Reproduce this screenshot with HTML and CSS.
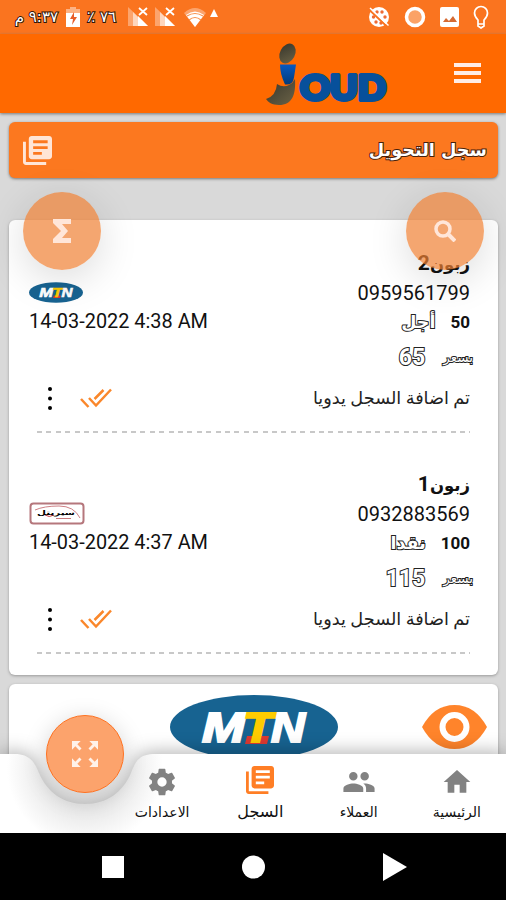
FILE: index.html
```html
<!DOCTYPE html>
<html lang="ar">
<head>
<meta charset="utf-8">
<title>سجل التحويل</title>
<link rel="stylesheet" href="styles.css">
</head>
<body>
<svg width="0" height="0" class="defs">
  <defs>
    <symbol id="library" viewBox="2 2 20 20"><path d="M4 6H2v14c0 1.100.9 2 2 2h14v-2H4V6zM20 2H8c-1.100 0-2 .9-2 2v12c0 1.100.9 2 2 2h12c1.100 0 2-.9 2-2V4c0-1.100-.9-2-2-2zm-1 9H9V9h10v2zm-4 4H9v-2h6v2zm4-8H9V5h10v2z"/></symbol>
    <symbol id="done" viewBox="0 0 34 20"><path d="M1 11l7.500 8M9 10l7 7.500L31 1.500M14.500 11l9-9" fill="none" stroke="currentColor" stroke-width="2.500"/></symbol>
    <symbol id="more" viewBox="0 0 6 24"><circle cx="3" cy="3" r="2"/><circle cx="3" cy="12.500" r="2"/><circle cx="3" cy="22" r="2"/></symbol>
    <symbol id="mtn" viewBox="0 0 168 64"><ellipse cx="84" cy="32" rx="84" ry="32" fill="#176391"/><path d="M77 41h22l-2 8H75z" fill="#dc3932"/><g font-family="Liberation Sans, sans-serif" font-size="42" font-weight="700" font-style="italic" stroke-width="2"><text x="32" y="47" textLength="43" lengthAdjust="spacingAndGlyphs" fill="#fff" stroke="#fff">M</text><text x="73" y="47" textLength="30" lengthAdjust="spacingAndGlyphs" fill="#fc0" stroke="#fc0">T</text><text x="101" y="47" textLength="34" lengthAdjust="spacingAndGlyphs" fill="#fff" stroke="#fff">N</text></g></symbol>
    <symbol id="signal" viewBox="0 0 20 20"><path d="M0 0L20 19H0z" fill="#fff" opacity=".35"/><path d="M5 5L10 10V19H5z" fill="#fff" opacity=".55"/><path d="M10 9L20 19H10z" fill="#fff"/><path d="M11 1l8 7M19 1l-8 7" stroke="#fff" stroke-width="1.800"/></symbol>
    <linearGradient id="stone" x2="1" y2="1"><stop stop-color="#35352b"/><stop offset="1" stop-color="#6c6347"/></linearGradient>
    <linearGradient id="blue" x2="0" y2="1"><stop stop-color="#0759c2"/><stop offset="1" stop-color="#043b78"/></linearGradient>
  </defs>
</svg>
<div class="screen">
  <div class="status">
    <div class="status-left">
      <span class="status-text time" dir="rtl">٩:٣٧ م</span>
      <svg class="battery" viewBox="0 0 14 20"><path d="M4 0h6v2h4v5H0V2h4z" fill="#fff" opacity=".45"/><path d="M0 6h14v14H0z" fill="#fff"/><path d="M8 5l-4 7h3l-1 6 5-8H8z" fill="#e85d28"/></svg>
      <span class="status-text percent" dir="rtl">٧٦ ٪</span>
      <svg class="signal"><use href="#signal"/></svg>
      <svg class="signal second"><use href="#signal"/></svg>
      <svg class="wifi" viewBox="0 0 22 19"><path d="M0 5Q11-5 22 5L11 19z" fill="#fff" opacity=".35"/><path d="M2 7Q11 0 20 7L11 19z" fill="#fff"/><path d="M3 8Q11 3 19 8M5 12Q11 7 17 12" fill="none" stroke="#f9924d" stroke-width="1.200"/></svg>
      <svg class="caret" viewBox="0 0 8 8"><path d="M4 0l4 8H0z" fill="#fff"/></svg>
    </div>
    <div class="status-right">
      <svg width="22" height="22" viewBox="0 0 22 22"><circle cx="11" cy="11" r="10" fill="#fff"/><g fill="#ef6b35"><circle cx="5.500" cy="11" r="1.700"/><circle cx="9" cy="6" r="1.700"/><circle cx="14" cy="6" r="1.700"/><circle cx="17" cy="11" r="1.700"/><circle cx="8" cy="16" r="1.700"/><circle cx="13" cy="17" r="1.700"/></g><path d="M1 3.500l18 17" stroke="#fa741f" stroke-width="2"/><path d="M2 2L20.500 19.500" stroke="#fff" stroke-width="1.500"/></svg>
      <svg width="22" height="22" viewBox="0 0 22 22"><circle cx="11" cy="11" r="8.500" fill="#fba266" stroke="#fff" stroke-width="3.500"/></svg>
      <svg width="19" height="20" viewBox="0 0 19 20"><rect width="19" height="20" rx="2" fill="#fff"/><path d="M3 15l3-4 3 3 4-5 4 6z" fill="#d66a32"/></svg>
      <svg width="16" height="24" viewBox="0 0 16 24"><path d="M5 19v-4C2 12 1.500 10 1.500 8a6.500 6.500 0 0113 0c0 2-.5 4-3.500 7v4zM5 18v3l3 2 3-2v-3" fill="none" stroke="#fff" stroke-width="1.700"/></svg>
    </div>
  </div>
  <div class="appbar">
    <svg class="brand" viewBox="0 0 130 70" width="130" height="70">
      <ellipse cx="21.500" cy="10.500" rx="7.500" ry="10.500" transform="rotate(28 21.500 10.500)" fill="url(#stone)"/>
      <path d="M14 21.500h16l-2 13q-1 8-9 7Q14 31 14 21.500z" fill="url(#blue)"/>
      <path d="M11 41q6 4 12 1 4-2 6-6c1 16-3 26-16 26-7 0-11-3-13-6q10-3 11-15z" fill="url(#stone)"/>
      <text x="34" y="57" textLength="86" lengthAdjust="spacingAndGlyphs">OUD</text>
    </svg>
    <div class="menu"><i></i><i></i><i></i></div>
  </div>
  <main class="content">
    <div class="title-card">
      <svg width="29" height="29"><use href="#library"/></svg>
      <h1 dir="rtl">سجل التحويل</h1>
    </div>
    <section class="card records">
      <article class="record">
        <div class="row name"><span dir="rtl">زبون<span class="digit">2</span></span></div>
        <div class="row phone"><svg class="operator" width="54" height="21"><use href="#mtn"/></svg><span>0959561799</span></div>
        <div class="row kind"><time>14-03-2022 4:38 AM</time><div class="pair"><span class="outlined state" dir="rtl">أجل</span><b>50</b></div></div>
        <div class="row price"><span class="outlined amount">65</span><span class="outlined label" dir="rtl">بسعر</span></div>
        <div class="row note"><div class="actions"><svg width="6" height="24"><use href="#more"/></svg><svg class="done" width="34" height="20"><use href="#done"/></svg></div><span dir="rtl">تم اضافة السجل يدويا</span></div>
        <div class="divider"></div>
      </article>
      <article class="record">
        <div class="row name"><span dir="rtl">زبون<span class="digit">1</span></span></div>
        <div class="row phone"><svg class="operator" width="56" height="23" viewBox="0 0 56 23"><rect x="1.500" y="1.500" width="53" height="20" rx="3" fill="#fff" stroke="#b5777c" stroke-width="2"/><path d="M6 8Q15 4 30 4t21 12" fill="none" stroke="#ce8085"/><path d="M16 13q4 3 9 0" fill="none" stroke="#c33a40"/><text x="8" y="13" font-family="DejaVu Sans, sans-serif" font-size="6.500" font-weight="700" textLength="38" lengthAdjust="spacingAndGlyphs">سيريتل</text><path d="M27 16.500h15" stroke="#c9797d"/></svg><span>0932883569</span></div>
        <div class="row kind"><time>14-03-2022 4:37 AM</time><div class="pair"><span class="outlined state" dir="rtl">نقدا</span><b>100</b></div></div>
        <div class="row price"><span class="outlined amount">115</span><span class="outlined label" dir="rtl">بسعر</span></div>
        <div class="row note"><div class="actions"><svg width="6" height="24"><use href="#more"/></svg><svg class="done" width="34" height="20"><use href="#done"/></svg></div><span dir="rtl">تم اضافة السجل يدويا</span></div>
        <div class="divider"></div>
      </article>
    </section>
    <section class="card summary">
      <span></span>
      <svg width="168" height="64"><use href="#mtn"/></svg>
      <svg class="eye" width="65" height="44" viewBox="0 0 65 44"><path d="M0 22Q12 0 32.500 0T65 22Q53 44 32.500 44T0 22z" fill="#ff842b"/><circle cx="32.500" cy="22" r="12" fill="none" stroke="#fff" stroke-width="6"/></svg>
    </section>
  </main>
  <nav class="bottom">
    <svg class="notch" width="506" height="80" viewBox="0 0 506 80"><defs><radialGradient id="glow" gradientUnits="userSpaceOnUse" cx="85" cy="15" r="78"><stop offset=".4" stop-color="#e2e2e2"/><stop offset="1" stop-color="#fff"/></radialGradient></defs><path fill="url(#glow)" d="M0 0H15C30 0 35 9 39 19C47 38 63 50 85 50S123 38 131 19C136 6 140 0 155 0H506V80H0z"/></svg>
    <div class="tabs">
      <a><svg width="32" height="32" viewBox="0 0 24 24"><path d="M19.430 12.980c.040-.320.070-.640.070-.980s-.030-.660-.070-.980l2.110-1.650a.5.5 0 00.120-.640l-2-3.460a.5.5 0 00-.610-.220l-2.490 1a7.300 7.300 0 00-1.690-.980L14.490 2.420A.5.5 0 0014 2h-4a.5.5 0 00-.490.420l-.380 2.650c-.610.250-1.170.590-1.690.980l-2.490-1a.5.5 0 00-.610.220l-2 3.460a.5.5 0 00.120.640l2.110 1.650c-.040.320-.070.650-.070.980s.030.660.070.980l-2.110 1.650a.5.5 0 00-.120.640l2 3.460c.120.220.390.300.610.220l2.490-1c.520.400 1.080.730 1.690.980l.380 2.650c.030.240.240.420.490.420h4c.250 0 .460-.180.490-.420l.380-2.650c.610-.250 1.170-.590 1.690-.980l2.490 1c.230.090.490 0 .610-.220l2-3.460a.5.5 0 00-.120-.640zM12 15.500a3.500 3.500 0 110-7 3.500 3.500 0 010 7z"/></svg><span dir="rtl">الاعدادات</span></a>
      <a class="active"><svg width="28" height="28"><use href="#library"/></svg><span dir="rtl">السجل</span></a>
      <a><svg width="34" height="34" viewBox="0 0 24 24"><path d="M16 11c1.660 0 2.990-1.340 2.990-3S17.660 5 16 5s-3 1.340-3 3 1.340 3 3 3zm-8 0c1.660 0 2.990-1.340 2.990-3S9.660 5 8 5 5 6.340 5 8s1.340 3 3 3zm0 2c-2.330 0-7 1.170-7 3.500V19h14v-2.500C15 14.170 10.330 13 8 13zm8 0c-.290 0-.620.020-.970.050C16.190 13.890 17 15.020 17 16.500V19h6v-2.500c0-2.330-4.670-3.500-7-3.500z"/></svg><span dir="rtl">العملاء</span></a>
      <a><svg width="32" height="32" viewBox="0 0 24 24"><path d="M10 20v-6h4v6h5v-8h3L12 3 2 12h3v8z"/></svg><span dir="rtl">الرئيسية</span></a>
    </div>
  </nav>
  <div class="system">
    <svg width="506" height="67" viewBox="0 0 506 67"><rect x="102" y="23" width="22" height="22"/><circle cx="253.500" cy="34" r="11.500"/><path d="M383 20L407 34 383 48z"/></svg>
  </div>
  <div class="fab sum"><svg width="18" height="24" viewBox="0 0 18 24"><path d="M0 0h18v5H9l6 7-6 7h9v5H0v-4l8-8-8-8z"/></svg></div>
  <div class="fab search"><svg width="22" height="22" viewBox="0 0 22 22"><circle cx="9" cy="9" r="7" fill="none" stroke="#ffe6d9" stroke-width="3.500"/><path d="M14 14l7 7" stroke="#ffe6d9" stroke-width="4"/></svg></div>
  <div class="fab expand"><svg width="26" height="26" viewBox="3 3 18 18"><path d="M15 3l2.300 2.300-2.890 2.870 1.420 1.420L18.700 6.700 21 9V3zM3 9l2.300-2.300 2.870 2.890 1.420-1.420L6.700 5.300 9 3H3zm6 12l-2.300-2.300 2.890-2.870-1.420-1.420L5.300 17.300 3 15v6zm12-6l-2.300 2.300-2.870-2.890-1.420 1.420 2.890 2.870L15 21h6z"/></svg></div>
</div>
</body>
</html>
```
FILE: styles.css
```css
* { box-sizing: border-box; }
body { margin: 0; font-family: Roboto, "DejaVu Sans", sans-serif; color: #111; }
svg { display: block; flex: none; }
.defs { position: absolute; }
.screen { position: relative; width: 506px; height: 900px; overflow: hidden; display: flex; flex-direction: column; }

.status { height: 34px; flex: none; background: #fa741f; display: flex; justify-content: space-between; padding: 0 17px 0 12px; }
.status-left, .status-right { display: flex; align-items: center; }
.status-right { gap: 14px; }
.status-text { color: #fff; font: 15px/20px "DejaVu Sans", sans-serif; -webkit-text-stroke: 2px #33170a; paint-order: stroke fill; white-space: nowrap; }
.time { width: 46px; }
.battery { width: 14px; height: 20px; margin: 0 6px 0 8px; }
.percent { width: 30px; }
.signal { width: 20px; height: 20px; margin-left: 12px; }
.signal.second { margin-left: 7px; }
.wifi { width: 22px; height: 19px; margin-left: 9px; }
.caret { width: 8px; height: 8px; margin: -8px 0 0 4px; }

.appbar { height: 79px; flex: none; background: #ff6900; display: flex; justify-content: flex-end; align-items: flex-start; padding: 9px 25px 0 0; gap: 58px; box-shadow: 0 1px 3px #777; z-index: 1; }
.brand { overflow: visible; }
.brand text { font: 900 34px Lato, sans-serif; fill: #07509b; stroke: #07509b; stroke-width: 4px; stroke-linejoin: round; }
.menu { width: 27px; padding-top: 20px; display: grid; gap: 4px; }
.menu i { height: 4px; background: #ffece6; }

.content { flex: 1; min-height: 0; overflow: hidden; background: #d9d9d9; padding: 9px 8px 0 9px; display: flex; flex-direction: column; }
.title-card { height: 56px; flex: none; border-radius: 6px; background: #fc781f; box-shadow: 0 1px 3px #777; display: flex; justify-content: space-between; align-items: center; padding: 0 11px 0 14px; fill: #ffe5d6; }
h1 { margin: 0; font: 700 17.700px/30px "DejaVu Sans", sans-serif; color: #fff; -webkit-text-stroke: 2px #46200d; paint-order: stroke fill; }
.card { background: #fff; border-radius: 6px; box-shadow: 0 1px 3px #999; flex: none; }
.records { margin-top: 42px; height: 455px; padding: 30px 28px 0 20px; }
.record { height: 221px; }
.row { display: flex; align-items: center; justify-content: space-between; font-size: 20px; }
.name { height: 28px; justify-content: flex-end; font: 700 16.500px/28px Roboto, "DejaVu Sans", sans-serif; }
.digit { font-size: 21px; }
.phone { height: 29px; }
.kind { height: 29px; }
.kind time { margin-top: -1px; font-size: 19.900px; }
.kind b { font-size: 17px; }
.pair { display: flex; align-items: center; gap: 15px; }
.outlined { color: #fff; -webkit-text-stroke: 2px #222; paint-order: stroke fill; font-family: Roboto, "DejaVu Sans", sans-serif; }
.state { font-size: 17.500px; font-weight: 700; }
.price { height: 42px; justify-content: flex-end; gap: 18px; margin-right: -3px; }
.amount { font-size: 23px; font-weight: 700; }
.label { font-size: 13.500px; }
.note { height: 40px; }
.note > span { font-size: 17.700px; color: #222; }
.actions { display: flex; align-items: center; gap: 27px; padding-left: 18px; }
.done { color: #fa872b; }
.divider { margin-left: 8px; margin-top: 13px; height: 2px; background: repeating-linear-gradient(90deg, #c8c8c8 0 5px, transparent 5px 9.400px); }
.summary { margin-top: 9px; height: 180px; display: grid; grid-template-columns: 161px 1fr 65px; padding: 11px 11px 0 0; }
.eye { margin-top: 10px; }

.bottom { position: absolute; left: 0; right: 0; top: 754px; height: 80px; }
.notch { position: absolute; inset: 0; overflow: visible; filter: drop-shadow(0 -2px 9px rgba(0,0,0,.3)); }
.tabs { position: relative; display: grid; grid-template-columns: repeat(4, 1fr); margin-left: 113px; height: 80px; fill: #828282; }
.tabs a { display: grid; grid-template-rows: 38px 22px; justify-items: center; align-items: center; padding-top: 9px; align-content: start; font: 14px/22px "DejaVu Sans", sans-serif; white-space: nowrap; }
.tabs .active { fill: #ff7e25; font-size: 16px; }
.tabs .active svg { margin-top: -4px; }
.system { height: 67px; flex: none; background: #000; fill: #fff; position: relative; }

.fab { position: absolute; width: 78px; height: 78px; border-radius: 50%; background: rgba(240,128,51,.7); display: flex; align-items: center; justify-content: center; fill: #ffe6d9; box-shadow: 0 10px 40px rgba(0,0,0,.14); }
.sum { left: 23px; top: 192px; }
.search { left: 406px; top: 192px; }
.expand { left: 46px; top: 715px; background: #fca36c; border: 1px solid #ff7221; fill: #fff2ea; box-shadow: 0 5px 25px rgba(0,0,0,.18); }
```
